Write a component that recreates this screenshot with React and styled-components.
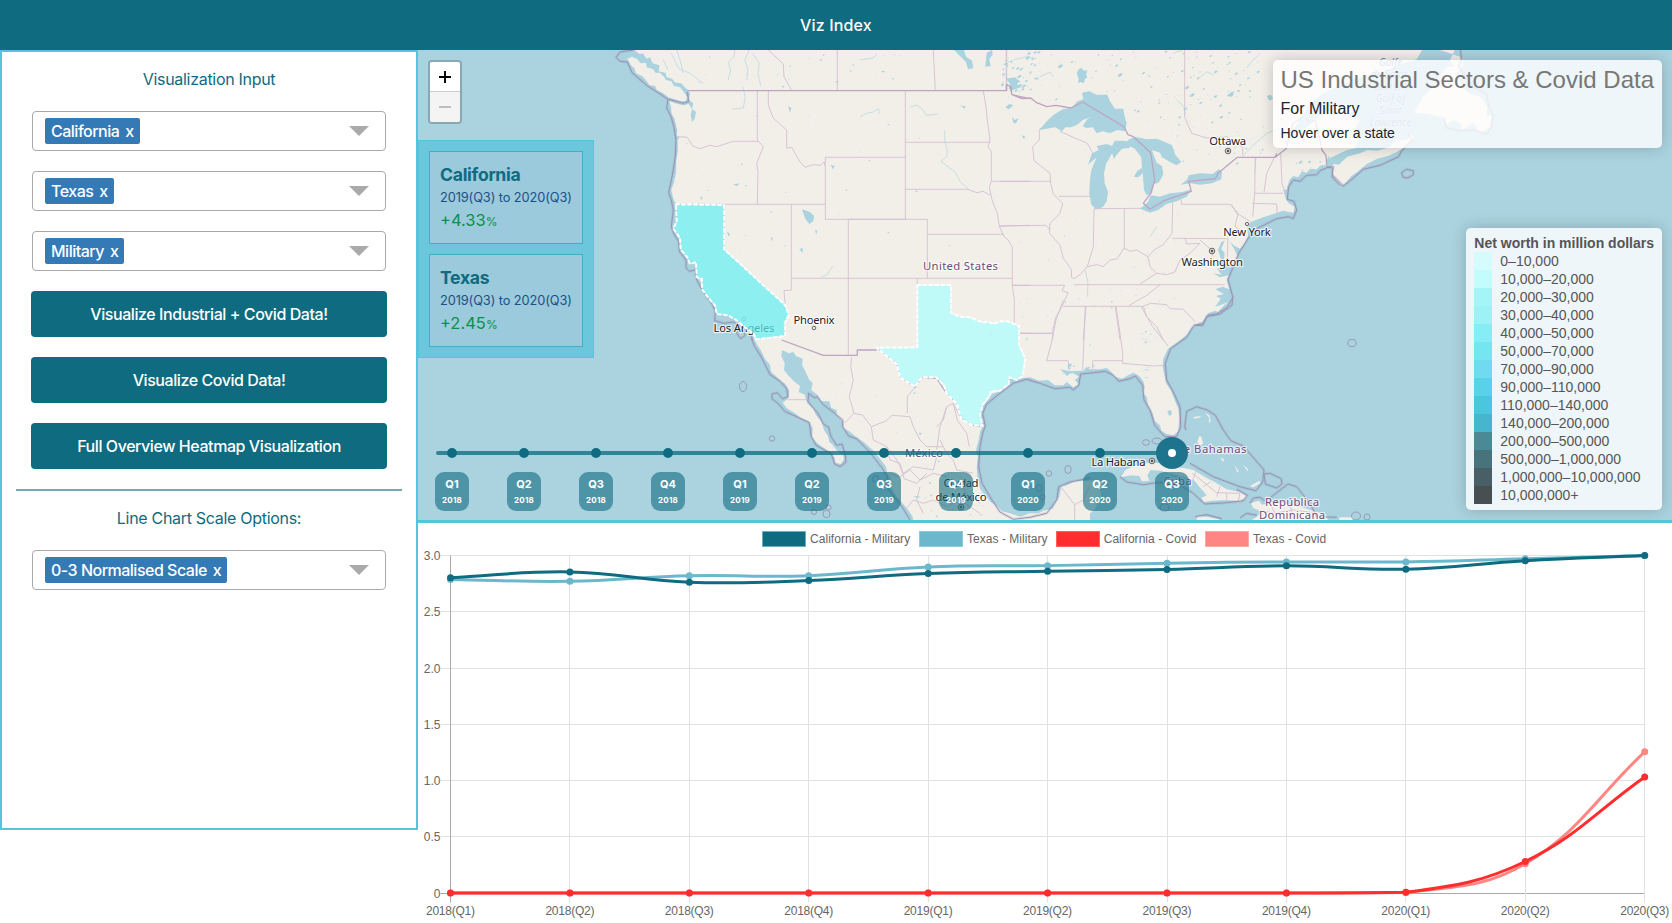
import React from 'react';
import styled, { createGlobalStyle } from 'styled-components';

const teal = '#0f6b80';
const cyan = '#55c4dc';
const ui = 'Inter, "Noto Sans", sans-serif';
const arial = '"Liberation Sans", Arial, sans-serif';

const GlobalStyle = createGlobalStyle`
  * { box-sizing: border-box; }
  html, body { margin: 0; padding: 0; background: #fff; overflow: hidden; }
  body { font-family: ${ui}; font-size: 16px; color: #212529; }
  p, h1, h2, h3, h4 { margin: 0; font-weight: 400; }
  button { font: inherit; letter-spacing: inherit; cursor: pointer; }
`;

/* ---------- page frame ---------- */
const Page = styled.div`
  width: 1672px;
  height: 923px;
  overflow: hidden;
  display: flex;
  flex-direction: column;
`;
const Header = styled.header`
  flex: none;
  height: 50px;
  padding-bottom: 1px;
  background: ${teal};
  color: #fff;
  display: flex;
  align-items: center;
  justify-content: center;
  font-weight: 500;
  letter-spacing: 0.15px;
`;
const Body = styled.main`
  flex: 1;
  display: flex;
  align-items: flex-start;
`;
const Sidebar = styled.aside`
  flex: none;
  width: 418px;
  height: 780px;
  border: 2px solid ${cyan};
  padding: 15px 14px 16px;
  display: flex;
  flex-direction: column;
  letter-spacing: -0.43px;
`;
const SideTitle = styled.h2`
  text-align: center;
  color: ${teal};
  font-size: 16px;
  line-height: 24px;
  letter-spacing: -0.3px;
  margin-bottom: ${(p) => p.$gap}px;
`;
const SelectBox = styled.div`
  height: 40px;
  margin: 0 16px 20px;
  padding: 0 16px 0 12px;
  border: 1px solid #aaa;
  border-radius: 4px;
  display: flex;
  align-items: center;
  justify-content: space-between;
`;
const Chip = styled.span`
  height: 26px;
  padding: 0 6px;
  border-radius: 2px;
  background: #337ab7;
  color: #fff;
  display: inline-flex;
  align-items: center;
  gap: 6px;
  line-height: 26px;
  font-weight: 500;
  letter-spacing: -0.5px;
`;
const Caret = styled.span`
  border-left: 10px solid transparent;
  border-right: 10px solid transparent;
  border-top: 10px solid #aaa;
  margin-top: -1px;
`;
const ActionButton = styled.button`
  height: 46px;
  margin: 0 15px 20px;
  border: 0;
  border-radius: 4px;
  background: ${teal};
  color: #fff;
  font-weight: 500;
`;
const Divider = styled.div`
  height: 2px;
  background: #73a9b5;
  margin-bottom: 15px;
`;
const Content = styled.section`
  width: 1254px;
  display: flex;
  flex-direction: column;
`;

/* ---------- map ---------- */
const MapPane = styled.div`
  position: relative;
  height: 473px;
  border-bottom: 3px solid ${cyan};
  background: #aad3df;
  overflow: hidden;
`;
const MapSvg = styled.svg`
  display: block;
`;
const ZoomBar = styled.div`
  position: absolute;
  left: 10px;
  top: 10px;
  width: 34px;
  border: 2px solid rgba(0, 0, 0, 0.2);
  border-radius: 4px;
  background-clip: padding-box;
  display: flex;
  flex-direction: column;
`;
const ZoomButton = styled.button`
  height: 30px;
  padding: 0;
  border: 0;
  border-bottom: ${(p) => (p.$off ? 0 : '1px solid #ccc')};
  border-radius: ${(p) => (p.$off ? '0 0 2px 2px' : '2px 2px 0 0')};
  background: ${(p) => (p.$off ? '#f4f4f4' : '#fff')};
  color: ${(p) => (p.$off ? '#bbb' : '#000')};
  display: flex;
  align-items: center;
  justify-content: center;
`;
const ChangePanel = styled.div`
  position: absolute;
  left: 0;
  top: 90px;
  width: 176px;
  padding: 10px;
  background: #6cc7dd;
  border: 1px solid ${cyan};
  display: flex;
  flex-direction: column;
  gap: 10px;
`;
const ChangeCard = styled.div`
  height: 93px;
  padding: 10px;
  background: #9acadb;
  border: 1px solid #43adc7;
`;
const ChangeName = styled.h3`
  font-size: 17.6px;
  font-weight: 700;
  line-height: 26px;
  letter-spacing: -0.3px;
  color: ${teal};
`;
const ChangeRange = styled.p`
  font-size: 12.8px;
  line-height: 19px;
  letter-spacing: -0.1px;
  color: #1a5088;
  white-space: nowrap;
`;
const ChangeValue = styled.p`
  font-size: 16.5px;
  line-height: 27px;
  color: #0d8f4c;
  small { font-size: 12px; }
`;
const Timeline = styled.div`
  position: absolute;
  left: -2px;
  top: 387px;
  display: flex;
  &::before {
    content: '';
    position: absolute;
    left: 20px;
    top: 14px;
    width: 736px;
    height: 4px;
    border-radius: 2px;
    background: rgba(15, 107, 128, 0.77);
  }
`;
const Stop = styled.div`
  position: relative;
  width: 72px;
  display: flex;
  flex-direction: column;
  align-items: center;
`;
const DotArea = styled.div`
  height: 32px;
  margin-bottom: 3px;
  display: flex;
  align-items: center;
`;
const Dot = styled.span`
  width: ${(p) => (p.$on ? 32 : 10)}px;
  height: ${(p) => (p.$on ? 32 : 10)}px;
  border-radius: 50%;
  background: ${(p) => (p.$on ? '#1f748d' : teal)};
  display: flex;
  align-items: center;
  justify-content: center;
  &::after {
    content: '';
    width: ${(p) => (p.$on ? 8 : 0)}px;
    height: ${(p) => (p.$on ? 8 : 0)}px;
    border-radius: 50%;
    background: #fff;
  }
`;
const StopLabel = styled.div`
  width: 34px;
  height: 39px;
  padding-top: 4px;
  border-radius: 9px;
  background: rgba(15, 107, 128, 0.6);
  color: #fff;
  text-align: center;
  font-size: 11px;
  font-weight: 700;
  line-height: 16px;
  small { display: block; font-size: 8px; line-height: 16px; letter-spacing: 0.2px; }
`;
const Panel = styled.div`
  position: absolute;
  right: 10px;
  top: ${(p) => p.$top}px;
  padding: 6px 8px;
  border-radius: 5px;
  background: rgba(255, 255, 255, 0.8);
  box-shadow: 0 0 15px rgba(0, 0, 0, 0.2);
  font-family: ${arial};
  white-space: nowrap;
`;
const InfoTitle = styled.h1`
  font-size: 24px;
  line-height: 27px;
  color: #777;
  margin-bottom: 6px;
`;
const InfoSub = styled.h4`
  font-size: 16px;
  line-height: 19px;
  margin-bottom: 7px;
`;
const InfoHint = styled.p`
  font-size: 14px;
  line-height: 17px;
`;
const LegendHead = styled.h4`
  font-size: 14px;
  font-weight: 700;
  line-height: 18px;
  color: #555;
`;
const LegendRow = styled.div`
  height: 18px;
  display: flex;
  gap: 8px;
  font-size: 14px;
  line-height: 18px;
  color: #555;
`;
const Swatch = styled.i`
  width: 18px;
  height: 18px;
  background: ${(p) => p.$c};
`;

/* ---------- chart ---------- */
const ChartLegend = styled.div`
  height: 28px;
  padding-top: 8px;
  padding-left: 344px;
  display: flex;
  font: 12px/16px ${arial};
  letter-spacing: 0.04px;
  color: #666;
`;
const ChartKey = styled.div`
  flex: none;
  width: ${(p) => p.$w}px;
  display: flex;
  gap: 4px;
  white-space: nowrap;
`;
const KeyBox = styled.span`
  width: 44px;
  height: 16px;
  background: ${(p) => p.$c};
  border: 1px solid ${(p) => p.$edge};
`;

/* ---------- geography ---------- */
// Points are listed in a 3x grid relative to a page offset; pin() maps them back to page pixels.
const pin = (ox, oy, s) => {
  const n = s.trim().split(/[\s,]+/).map(Number);
  const out = [];
  for (let i = 0; i < n.length; i += 2)
    out.push(`${(ox + n[i] / 3).toFixed(1)} ${(oy + n[i + 1] / 3).toFixed(1)}`);
  return out.join(' L');
};
const W = (s) => pin(600, 40, s);
const E = (s) => pin(1000, 40, s);
const NE = (s) => pin(1260, 40, s);
const B = (s) => pin(416, 330, s);
const G = (s) => pin(800, 300, s);
const C = (s) => pin(1060, 330, s);
const join = (...p) => 'M' + p.join(' L');
const many = (fn, list) => list.map((s) => 'M' + fn(s)).join(' ');

const mainland = join(
  W('104 30 118 42 128 40 140 56 150 52 158 70 178 76 176 94 196 98 200 112 216 116 226 128 244 130 254 142 264 150 270 160 266 180 280 190 276 206 288 216 284 236 276 246 272 226 276 208 266 192 250 196 225 190 207 182 213 200 215 222 224 238 228 256 232 270 230 286 238 294 232 300 234 330 229 360 228 400 221 430 214 450 220 476 230 495 234 530 224 562 228 575 242 596 243 622 255 640 270 662 290 664 290 690 294 712 308 735 308 750 325 775 345 798 350 822 385 825 412 838 430 850 452 872 462 895'),
  B('1014 25 1024 45 1034 60 1048 88 1062 104 1065 125 1090 148 1108 162 1120 182 1117 205 1100 218 1112 235 1135 248 1152 262 1178 274 1190 294 1188 320 1200 336 1218 350 1246 368 1256 384 1258 398 1275 402 1284 386 1280 374 1264 364 1252 346 1240 336 1236 318 1224 300 1218 276 1200 256 1192 236 1174 220 1166 194 1148 186 1152 168 1134 154 1118 138 1104 120 1106 100 1096 78 1098 60 1118 70 1132 66 1140 78 1160 86 1158 104 1168 124 1180 150 1190 158 1186 180 1204 194 1216 214 1240 214 1246 234 1262 240 1262 256 1282 276 1282 294 1300 304 1320 320'),
  G('168 410 190 425 218 450 240 476 258 500 262 520 272 534 274 562 290 590 320 624 338 650 340 668 870 668 870 640 884 630 892 610 904 590 900 570 908 552 896 540 860 542 826 544 800 556 784 560 778 590 768 606 758 626 730 632 716 640 690 640 660 650 630 640 606 634 590 618 572 606 556 588 540 566 532 530 530 500 534 470 528 450 536 420 540 396 548 378 540 345 548 318 566 296 575 282 604 272 612 262 628 256 626 236 650 236 690 232 716 242 744 240 764 256 790 256 800 246 820 262 836 252 824 240 838 230 820 220 796 222 780 208 810 214 850 212 860 200 868 208 900 208 920 204 932 214 946 230 966 236 984 226 1000 218 1018 228 1030 244 1034 262 1028 280 1040 290 1044 314 1058 340 1064 362 1080 376 1084 392 1100 402 1120 406 1134 394 1138 360 1136 330 1124 300 1112 270 1098 250 1092 222 1088 200 1090 176 1104 146 1136 124 1160 104 1176 80'),
  E('580 862 596 848 606 846 624 820 646 812 654 816 668 800 684 786 664 794 646 800 662 776 648 768 672 762 646 748 668 740 688 748 680 720 686 706 660 712 640 700 664 704 650 684 676 690 656 672 664 660 654 630 664 606 674 602 664 626 674 640 672 664 686 682 702 670 712 646 702 626 690 606 704 618 720 626 732 612 744 588 742 560 752 546 790 532 820 522 850 512 866 516 880 518 884 500 866 490 858 478 850 450 860 448 868 420 880 408 894 412 906 394 920 398 930 386 950 388 962 376 976 376 984 350 990 348'),
  NE('206 356 240 340 262 330 285 325 296 300 285 270 300 240 270 225 290 200 262 190 230 200 180 228 140 262 95 290 70 310 84 290 120 240 150 190 190 160 230 140 300 112 380 90 430 70 470 58 486 30'),
  W('104 30')
);

const islands = many(W, [
  '82 56 96 50 112 58 122 70 138 68 140 82 160 88 166 98 180 98 192 110 198 120 214 124 222 138 240 142 254 160 262 172 256 184 240 184 222 178 205 172 190 160 170 150 166 138 148 136 138 120 126 108 108 100 104 86 92 74 82 56',
]) + many(NE, [
  '212 380 222 372 236 374 262 350 300 340 322 330 352 332 388 322 410 300 440 300 452 282 462 296 440 318 410 336 384 348 352 356 320 372 296 392 272 410 256 430 244 436 228 420 218 404',
  '540 30 584 30 570 60 582 80 560 80 540 110 520 140 490 170 462 218 500 222 552 232 560 256 580 240 600 248 606 270 640 250 660 280 690 262 696 226 680 230 682 200 660 170 628 160 606 140 590 100 606 80 610 60 600 50',
]) + many(C, [
  '182 442 196 420 224 408 268 398 306 400 330 410 372 414 400 420 440 444 470 460 500 478 540 486 562 500 540 514 500 510 456 512 432 516 424 504 440 496 418 470 404 452 372 440 330 430 300 422 272 420 262 436 268 452 246 454 238 438 214 436',
  '410 558 440 560 478 568 480 580 410 580', '572 520 596 512 606 524 640 516 700 524 740 536 800 556 806 580 560 580 590 560 606 545 580 534',
  '838 562 878 562 878 580 838 580', '418 318 424 320 430 342 420 344 412 336', '398 262 420 258 424 261 404 266', '436 248 448 256 452 272 446 280 448 264', '480 382 492 388 490 396', '524 404 536 424 532 428', '550 404 564 418 562 424', '570 468 598 452 600 460 580 472', '456 348 464 356 462 366',
]);

const lakes = many(E, [
  '118 270 140 244 160 225 188 208 215 203 232 184 250 178 246 158 268 154 290 164 322 164 330 184 345 206 370 206 374 230 380 250 375 274 352 270 330 280 308 274 290 280 278 262 258 264 248 258 262 238 272 232 248 240 232 254 214 262 196 262 186 274 166 262 140 266',
  '264 374 276 340 296 330 290 318 320 312 336 318 344 302 372 302 396 310 388 324 366 326 350 344 342 356 336 340 326 358 318 372 312 400 314 430 324 456 320 484 308 502 288 508 274 494 268 460 270 420 274 390 290 352',
  '384 300 404 290 440 298 470 296 500 308 516 316 526 344 544 366 530 376 510 366 486 352 480 338 456 330 462 348 470 368 486 378 490 404 476 428 462 432 456 460 440 466 432 450 428 400 414 412 402 410 412 392 426 384 424 352 404 326 376 312',
  '420 506 444 486 452 466 480 470 510 460 546 456 574 448 560 470 530 484 500 492 474 510 450 518',
  '542 434 562 418 566 406 600 400 638 402 656 388 666 396 664 418 636 430 600 434 572 430',
  '230 100 236 88 244 84 252 92 262 90 258 104 262 112 254 118 252 130 242 126 234 130 236 116', '800 168 812 164 820 176 808 182',
]) + many(W, [
  '1062 30 1092 30 1098 50 1116 62 1120 84 1104 88 1098 66', '1160 38 1176 30 1178 44 1168 56 1172 78 1156 80', '606 508 630 516 642 528 640 544 628 552 616 536',
  '1216 202 1228 192 1240 196 1226 208', '1236 230 1244 240 1256 234 1248 250 1240 248', '1264 286 1276 290 1272 298', '646 568 652 574 648 584', '380 574 390 582 386 590', '564 198 574 204 570 218', '1080 196 1098 200 1094 206', '692 374 704 378 698 388', '598 628 608 624 608 638', '842 92 856 94 850 98', '398 434 418 430 412 438', '300 468 308 474 304 480', '512 590 518 594 516 606',
  '1218 116 1244 112 1260 124 1250 132 1266 140 1240 150 1226 146 1230 132',
]) + many(G, ['1102 334 1112 330 1116 342 1108 348', '356 398 366 400 360 406', '340 588 362 590 350 594']);

// scattered small lakes of the Canadian shield and the northern plains
let seed = 7;
const rnd = () => { seed = (seed * 16807) % 2147483647; return seed / 2147483647; };
const speck = (n, x, y, w, h, max) =>
  Array.from({ length: n }, () => {
    const a = x + rnd() * w, b = y + rnd() * h, s = 0.35 + rnd() * rnd() * max;
    return `M${a.toFixed(1)} ${b.toFixed(1)}l${(s * 1.3).toFixed(1)} ${(-s).toFixed(1)}l${(s * 1.2).toFixed(1)} ${(s * 0.2).toFixed(1)}l${(-s * 0.6).toFixed(1)} ${(s * 0.9).toFixed(1)}l${(-s * 1.1).toFixed(1)} ${(s * 0.8).toFixed(1)}z`;
  }).join('');
const specks =
  speck(95, 1008, 51, 250, 50, 1.9) + speck(40, 1080, 90, 170, 34, 1.7) + speck(60, 1000, 52, 40, 40, 1.7) +
  speck(34, 1170, 120, 95, 45, 1.2) + speck(22, 690, 54, 220, 34, 1) + speck(30, 680, 110, 280, 150, 0.8) +
  speck(26, 1000, 190, 180, 120, 0.7) + speck(24, 980, 290, 220, 60, 0.7) + speck(16, 820, 360, 120, 120, 0.8) +
  speck(24, 1060, 364, 40, 12, 1.4) + speck(20, 1290, 160, 40, 14, 1.4) + speck(16, 1140, 320, 12, 60, 0.9) + speck(24, 920, 480, 70, 38, 0.9);

const rivers = many(W, [
  '384 122 392 90 384 66 402 50 404 30', '440 122 444 90 434 60 448 30', '482 138 474 100 478 70 458 40', '396 208 430 204 436 170 428 140', '780 230 800 220 820 216 836 206 838 222', '932 200 950 196 966 206 978 226 1014 222', '1034 272 1034 300 1042 330 1040 350 1022 364 1034 372 1046 382 1066 396 1080 424 1104 446', '664 712 680 706 698 678', '780 60 820 54 830 40', '310 130 270 100 236 86 214 40', '250 100 240 60 230 30', '204 90 190 60',
]) + many(E, ['726 350 760 316 800 280 850 260', '556 224 552 200 530 180', '256 690 264 730 262 770', '520 40 534 34 548 34', '740 84 750 70 766 54 780 40', '450 590 470 560', '768 352 764 400', '40 60 80 50 110 56', '120 110 150 96 160 110', '590 120 620 96 640 104']);

const states = many(W, [
  '472 152 472 300 490 320 470 370 474 395 472 493', '505 152 505 195 520 235 560 270 560 325 575 322 600 365 615 382 640 374 662 376 672 366 676 378',
  '234 290 262 292 278 318 300 326 330 316 350 320 400 304 475 304', '232 493 676 493', '676 538 676 352 916 352 916 538 676 538', '916 152 916 352', '916 307 1171 307', '916 448 1104 448 1130 458 1150 454 1170 466', '1150 152 1158 200 1162 240 1170 300 1164 320 1174 334 1174 424 1168 440 1176 480 1192 520 1198 558 1212 590 1225 600 1237 622 1237 736 1243 780 1243 850',
  '1174 424 1290 424', '1198 558 1290 556', '982 583 1212 583', '745 538 982 538 982 715', '574 493 574 750 552 752 556 800', '745 538 745 948', '574 715 1237 715', '952 715 952 735', '1237 736 1290 736', '1258 880 1290 880',
  '712 30 712 152', '1000 30 1006 152', '1219 30 1219 140', '505 30 550 72 552 110 575 152', '372 493 372 628',
]) + many(E, [
  '20 30 20 134', '554 30 554 232 575 280 620 294 680 290 728 322 728 345', '118 270 118 300 98 320 102 362 150 400 152 430 160 462 188 490 180 520 150 550 148 580 180 615 190 655 215 690 214 712 224 716', '0 424 152 424', '0 558 138 556 150 570', '180 274 220 292 262 310 278 340', '176 469 296 469', '282 506 424 505', '282 506 280 620 262 680 240 704 222 716', '373 506 373 624', '262 680 290 674 310 680 330 660 352 656 372 624 390 634 410 630 444 650 462 630 490 614 516 580 518 480',
  '518 595 684 596 682 656', '444 650 450 680 470 700 420 732', '470 700 500 704 524 696 540 660 570 640 600 610 560 612 556 596', '600 600 630 626 640 650', '544 480 544 493 690 493 714 520 705 560 730 576', '694 493 710 520 752 545', '38 736 194 736 186 752 204 758 186 800 168 830 158 870 158 900', '190 799 430 799 452 790 500 794 510 806 550 808 586 846', '222 734 480 734 674 734', '480 734 440 766 388 796', '258 799 250 900', '346 799 360 900', '430 799 440 830 470 860 490 900',
  '766 352 764 460 758 530', '764 460 850 460', '757 490 830 492 832 524', '826 346 800 400 792 458', '842 340 846 430 856 460', '118 268 174 238 216 204', '290 506 298 470 294 380 322 340 300 330', '182 272 210 208', '60 880 156 880',
]) + many(G, [
  '790 0 768 60 754 130 740 182 804 182 808 210', '856 20 848 210', '948 20 960 100 968 160 968 190 1060 198 1090 196', '878 206 878 182 966 182', '1024 20 1058 80 1104 138', '658 100 754 100',
  '155 172 152 200 160 240 148 290 162 340 135 368', '162 340 188 345 214 380 260 362 276 346 330 350 340 380 360 420', '345 262 322 290 322 340', '410 450 420 380 440 320 460 310 480 350', '214 380 220 420 260 440 290 480 310 520', '420 420 440 460 460 480 470 510 520 520', '262 520 300 530 330 510 360 540 400 520 440 530', '440 320 430 360 410 380', '310 520 340 500 400 510 410 470', '360 420 380 440 430 440', '320 624 340 600 370 610 400 600 440 620 480 600 540 640', '360 560 350 600 370 640', '480 550 500 580 540 610', '460 310 472 360 500 400 508 440', '782 560 824 614 824 660', '824 614 850 600 868 560', '260 440 270 480 300 490 312 536 350 550 380 520',
]) + many(C, ['398 450 410 420', '430 470 452 455', '470 500 480 470', '500 490 500 510', '540 490 535 512', '396 430 410 440 470 488 540 490', '600 540 640 550 700 540 760 548', '630 520 650 560', '690 525 700 565']) + many(B, ['1115 209 1175 209']);

const borders = many(W, ['262 152 1219 152 1219 134 1230 138 1236 164 1290 176', '545 900 670 946 772 946 772 930 830 930']) +
  many(E, ['0 152 20 152 20 134 32 140 36 164 66 176 92 174 110 188 140 200 168 196 212 204 248 186 372 260 384 284 400 290 452 338 464 420 452 460 430 490 450 508 492 482 574 454 566 424 646 416 654 400 712 352 826 352 830 340']) +
  many(NE, ['0 352 46 352 78 326 100 250 130 230 150 246 166 240 180 300 186 330 198 346 200 376']) +
  many(G, ['230 143 290 190 300 230 345 262 365 232 410 235 440 280 470 310 485 355 515 375 548 380']);

const maritime = many(W, [
  '100 30 60 36 48 52 60 64 82 66 96 98 140 136 180 162 204 178 230 184 250 190 266 184 262 156', '204 178 200 204 214 232 222 262 228 300 226 350 218 400 206 458 214 480 220 510 214 560 222 582 236 605 238 634 258 660 258 684 268 694 286 690 290 720 308 752 336 792 346 812 344 842 372 850 400 846 420 856 410 880 422 896 436 886 426 868 446 870 458 900',
]) + many(B, [
  '1006 25 1016 50 1034 78 1050 110 1062 134 1092 154 1112 176 1116 200 1100 206 1084 188 1068 192 1068 206 1088 222 1106 244 1150 264 1180 278 1186 320 1200 346 1246 372 1256 402 1272 410 1290 396 1288 374 1278 342 1262 346 1244 318 1238 292 1222 282 1206 250 1190 232 1176 214 1178 190 1196 204 1204 200 1222 224 1246 242 1280 270 1280 290 1298 318 1320 326',
]) + many(G, [
  '168 414 212 460 246 504 262 530 260 560 280 588 306 620 330 660', '556 378 548 400 540 440 536 500 546 550 576 600 600 636 640 658 690 652 740 640 770 600 776 560 810 546 870 534',
  '556 378 548 340 560 312 600 280 640 250 680 238 720 250 764 266 810 262 820 270 836 256 842 222 880 218 916 214 940 226 956 244 990 236 1006 228 1028 256 1032 300 1050 330 1064 376 1094 410 1130 410 1142 380 1140 320 1122 280 1100 240 1096 190 1112 146 1160 112 1182 76 1208 72 1224 46 1250 42 1282 22 1300 -10',
]) + many(E, ['582 856 608 856 620 830 660 822 696 796 698 770 684 718 700 680 716 640 748 590 770 566 830 536 866 530 880 536 890 510 882 484 862 478 866 440 880 420 900 424 920 406 950 404 960 392 984 382 1000 380 996 410 1020 436']) +
  many(NE, ['200 380 216 384 218 406 250 438 276 418 310 388 360 376 416 350 424 334 456 300 444 282', '602 30 604 60 596 80 640 140 680 162 686 200 700 224 694 262 680 282 640 270 600 272 560 264 552 236', '424 398 440 388 460 392 460 404 444 414 430 412 424 398']) +
  many(C, ['378 300 374 290 380 244 410 230 442 240 466 256 490 300 512 332 550 348 612 420 608 456 588 482 540 470 460 440 390 400', '180 440 200 456 250 464 290 458 350 460 400 490 434 522 500 518 550 512 562 496 530 478', '612 432 630 430 664 446 666 462 650 474 616 462 612 432', '632 502 684 462 710 470 750 520 770 560 830 562', '570 520 580 504 600 502 614 512', '406 560 440 554 486 566', '540 564 560 550 590 556']);

const rings = [[743, 386.5, 3.5, 5], [772, 438.5, 2.7, 2.7], [814, 512, 2.6, 2.6], [826.5, 514, 3.6, 3.6], [828.5, 507.5, 2.6, 2.6], [1146, 442.5, 3.5, 2.8], [1049, 473.5, 2.8, 2.8], [1068, 469.5, 3.2, 4], [1039, 488, 3, 3.4], [1042.5, 497, 2.6, 2.6], [1164.5, 507.5, 4.5, 3.6], [1352, 343, 4.2, 3.6], [875.5, 479, 3, 3.4], [1356, 516, 4.5, 4], [1367, 517, 3, 3], [1157, 441, 5, 3]];

const california = join(W('228 493 372 495 372 628 430 680 490 736 556 796 566 824 554 850 556 888 468 898 462 882 440 866 412 842 384 826 350 822 346 798 324 772 306 748 306 716 290 712 288 666 270 672 262 652 242 628 240 594 220 566 230 544'));
const texas = join(G('352 -45 453 -45 453 38 480 50 510 52 550 68 562 64 580 72 600 64 622 64 657 78 657 135 676 176 668 228 650 240 628 232 626 252 600 272 572 274 570 286 548 314 540 345 548 378 515 375 484 358 470 310 440 282 432 256 408 232 365 232 345 260 300 232 290 192 230 143 352 142'));

const Town = ({ x, y, size = 11.3, w, children, anchor = 'middle', fill = '#222', halo = 2.4 }) => (
  <text x={x} y={y} fontSize={size} textAnchor={anchor} fill={fill} textLength={w}
    stroke="rgba(255,255,255,.7)" strokeWidth={halo} strokeLinejoin="round" paintOrder="stroke">{children}</text>
);
const plum = '#704c7c';

const BaseMap = () => (
  <MapSvg width="1254" height="470" viewBox="418 50 1254 470" fontFamily='"Noto Sans", sans-serif'>
    <path d={mainland} fill="#f2efe9" />
    <path d={islands} fill="#f2efe9" />
    <g fill="none" strokeLinejoin="round">
      <path d={rivers} stroke="#b5d6df" strokeWidth="0.7" />
      <path d={states} stroke="#d3bfd2" strokeWidth="0.9" />
    </g>
    <path d={lakes} fill="#aad3df" />
    <path d={specks} fill="#aad3df" />
    <g fill="none" strokeLinejoin="round">
      <path d={maritime} stroke="#8f8bb0" strokeOpacity="0.18" strokeWidth="3" />
      <path d={maritime} stroke="#9b92b3" strokeWidth="1" />
      <path d={borders} stroke="#bea3c2" strokeWidth="1.3" />
      {rings.map(([x, y, a, b]) => <ellipse key={`${x}-${y}`} cx={x} cy={y} rx={a} ry={b} stroke="#9b92b3" strokeWidth="0.9" />)}
    </g>
    <g fill="#f2efe9" stroke="#444" strokeWidth="0.8">
      <circle cx="744" cy="319" r="1.8" strokeOpacity="0.5" /><circle cx="814" cy="328" r="1.8" /><circle cx="1247" cy="224" r="1.6" />
      {[[1228, 151], [1212, 251], [1152, 461], [961, 507]].map(([x, y]) => (
        <g key={x}><circle cx={x} cy={y} r="2.8" /><circle cx={x} cy={y} r="1" fill="#444" /></g>
      ))}
    </g>
    <g fontStyle="italic">
      {['Golfe', 'du Saint-', 'Laurent', 'Gulf of', 'Saint', 'Lawrence'].map((t, i) => (
        <Town key={t} x={1390.5} y={65.5 + i * 12} size={10} fill="#6488c6" halo={0.6}>{t}</Town>
      ))}
    </g>
    <Town x={744} y={332} w={61}>Los Angeles</Town>
    <Town x={814} y={324} w={41}>Phoenix</Town>
    <Town x={1227.7} y={144.5} w={37}>Ottawa</Town>
    <Town x={1247} y={236} w={47.5}>New York</Town>
    <Town x={1212.3} y={265.5} w={61.5}>Washington</Town>
    <Town x={960.5} y={270} w={75} fill={plum}>United States</Town>
    <Town x={924} y={456.5} w={38} fill={plum}>México</Town>
    <Town x={961} y={487} w={35}>Ciudad</Town>
    <Town x={961} y={501} w={51}>de México</Town>
    <Town x={1118.5} y={465.5} w={54}>La Habana</Town>
    <Town x={1246.5} y={453} w={77} anchor="end" fill={plum}>The Bahamas</Town>
    <Town x={1177.5} y={485} w={28} fill={plum}>Cuba</Town>
    <Town x={1292} y={506} w={54} fill={plum}>República</Town>
    <Town x={1292} y={519} w={66} fill={plum}>Dominicana</Town>
    <g fillOpacity="0.7" stroke="#fff" strokeWidth="2" strokeDasharray="3" strokeLinecap="round" strokeLinejoin="round">
      <path d={california + 'Z'} fill="#63eff1" />
      <path d={texas + 'Z'} fill="#a9ffff" />
    </g>
  </MapSvg>
);

/* ---------- chart drawing ---------- */
const X0 = 450.5, DX = 119.42, Y0 = 893, TOP = 555.5;
const xs = Array.from({ length: 11 }, (_, i) => X0 + i * DX);
const val = (v) => Y0 - ((Y0 - TOP) * v) / 3;
const zero = [0, 0, 0, 0, 0, 0, 0, 0];
const series = [
  { color: '#ff8682', data: [...zero, 0.004, 0.26, 1.255] },
  { color: '#ff2d2d', data: [...zero, 0.006, 0.28, 1.031] },
  { color: '#6bb8cc', data: [2.787, 2.771, 2.82, 2.82, 2.898, 2.91, 2.932, 2.943, 2.943, 2.971, 3] },
  { color: teal, data: [2.803, 2.854, 2.762, 2.778, 2.84, 2.86, 2.876, 2.908, 2.878, 2.953, 3] },
];
const spline = (data) => {
  const p = data.map((v, i) => [xs[i], val(v)]);
  const clamp = (y) => Math.max(TOP, Math.min(Y0, y));
  const ctl = p.map((c, i) => {
    const a = p[i - 1] || c, b = p[i + 1] || c;
    const d1 = Math.hypot(c[0] - a[0], c[1] - a[1]), d2 = Math.hypot(b[0] - c[0], b[1] - c[1]);
    const f1 = (0.4 * d1) / (d1 + d2), f2 = (0.4 * d2) / (d1 + d2);
    return [c[0] - f1 * (b[0] - a[0]), clamp(c[1] - f1 * (b[1] - a[1])), c[0] + f2 * (b[0] - a[0]), clamp(c[1] + f2 * (b[1] - a[1]))];
  });
  return p.reduce((d, c, i) => (i ? `${d}C${ctl[i - 1][2]} ${ctl[i - 1][3]} ${ctl[i][0]} ${ctl[i][1]} ${c[0]} ${c[1]}` : `M${c[0]} ${c[1]}`), '');
};
const quarters = ['2018(Q1)', '2018(Q2)', '2018(Q3)', '2018(Q4)', '2019(Q1)', '2019(Q2)', '2019(Q3)', '2019(Q4)', '2020(Q1)', '2020(Q2)', '2020(Q3)'];
const LineChart = () => (
  <svg width="1254" height="372" viewBox="418 551 1254 372" overflow="visible" fontFamily={arial} fontSize="12" fill="#666">
    {['3.0', '2.5', '2.0', '1.5', '1.0', '0.5', '0'].map((t, i) => {
      const y = Math.floor(val(3 - i * 0.5)) + 0.5;
      return (
        <g key={t}>
          <line x1={440.5} x2={1644.7} y1={y} y2={y} stroke={t === '0' ? '#a9a9a9' : '#e1e1e1'} />
          <text x="440.5" y={y + 4} textAnchor="end">{t}</text>
        </g>
      );
    })}
    {quarters.map((t, i) => {
      const x = Math.floor(xs[i]) + 0.5;
      return (
        <g key={t}>
          <line x1={x} x2={x} y1={TOP} y2={902.5} stroke={i ? '#e1e1e1' : '#a9a9a9'} />
          <text x={xs[i]} y="914.5" textAnchor="middle" textLength="49">{t}</text>
        </g>
      );
    })}
    {series.map((s) => (
      <g key={s.color}>
        <path d={spline(s.data)} fill="none" stroke={s.color} strokeWidth="3" />
        {s.data.map((v, i) => <circle key={i} cx={xs[i]} cy={val(v)} r="3.5" fill={s.color} />)}
      </g>
    ))}
  </svg>
);

const Select = ({ children }) => (
  <SelectBox><Chip>{children}<span>x</span></Chip><Caret /></SelectBox>
);
const Change = ({ name, value }) => (
  <ChangeCard>
    <ChangeName>{name}</ChangeName>
    <ChangeRange>2019(Q3) to 2020(Q3)</ChangeRange>
    <ChangeValue>{value}<small>%</small></ChangeValue>
  </ChangeCard>
);
const scale = [
  ['#d5fbfc', '0–10,000'], ['#c2fcfd', '10,000–20,000'], ['#a3f5f6', '20,000–30,000'], ['#9cf2f4', '30,000–40,000'],
  ['#86edf7', '40,000–50,000'], ['#75e5f0', '50,000–70,000'], ['#70daf0', '70,000–90,000'], ['#5ad1ea', '90,000–110,000'],
  ['#4bc6df', '110,000–140,000'], ['#48b5cf', '140,000–200,000'], ['#4a8a97', '200,000–500,000'], ['#46737c', '500,000–1,000,000'],
  ['#485f65', '1,000,000–10,000,000'], ['#484f51', '10,000,000+'],
];
const keys = [
  ['California - Military', teal, '#6bb0bf', 157], ['Texas - Military', '#6bb8cc', '#8ec9d8', 136.7],
  ['California - Covid', '#ff2d2d', '#ff6060', 149.3], ['Texas - Covid', '#ff8682', '#ffaaa6', 125],
];

export default function App() {
  return (
    <Page>
      <GlobalStyle />
      <Header>Viz Index</Header>
      <Body>
        <Sidebar>
          <SideTitle $gap={20}>Visualization Input</SideTitle>
          <Select>California</Select>
          <Select>Texas</Select>
          <Select>Military</Select>
          <ActionButton>Visualize Industrial + Covid Data!</ActionButton>
          <ActionButton>Visualize Covid Data!</ActionButton>
          <ActionButton>Full Overview Heatmap Visualization</ActionButton>
          <Divider />
          <SideTitle $gap={20}>Line Chart Scale Options:</SideTitle>
          <Select>0-3 Normalised Scale</Select>
        </Sidebar>
        <Content>
          <MapPane>
            <BaseMap />
            <ZoomBar>
              <ZoomButton aria-label="Zoom in">
                <svg width="12" height="12" viewBox="0 0 12 12"><path d="M6 0v12M0 6h12" stroke="currentColor" strokeWidth="1.9" /></svg>
              </ZoomButton>
              <ZoomButton $off aria-label="Zoom out">
                <svg width="12" height="12" viewBox="0 0 12 12"><path d="M0 6h12" stroke="currentColor" strokeWidth="1.9" /></svg>
              </ZoomButton>
            </ZoomBar>
            <ChangePanel>
              <Change name="California" value="+4.33" />
              <Change name="Texas" value="+2.45" />
            </ChangePanel>
            <Timeline>
              {quarters.map((q, i) => (
                <Stop key={q}>
                  <DotArea><Dot $on={i === 10} /></DotArea>
                  <StopLabel>{q.slice(5, 7)}<small>{q.slice(0, 4)}</small></StopLabel>
                </Stop>
              ))}
            </Timeline>
            <Panel $top={10}>
              <InfoTitle>US Industrial Sectors &amp; Covid Data</InfoTitle>
              <InfoSub>For Military</InfoSub>
              <InfoHint>Hover over a state</InfoHint>
            </Panel>
            <Panel $top={178}>
              <LegendHead>Net worth in million dollars</LegendHead>
              {scale.map(([c, t]) => <LegendRow key={t}><Swatch $c={c} />{t}</LegendRow>)}
            </Panel>
          </MapPane>
          <ChartLegend>
            {keys.map(([t, c, edge, w]) => <ChartKey key={t} $w={w}><KeyBox $c={c} $edge={edge} />{t}</ChartKey>)}
          </ChartLegend>
          <LineChart />
        </Content>
      </Body>
    </Page>
  );
}
